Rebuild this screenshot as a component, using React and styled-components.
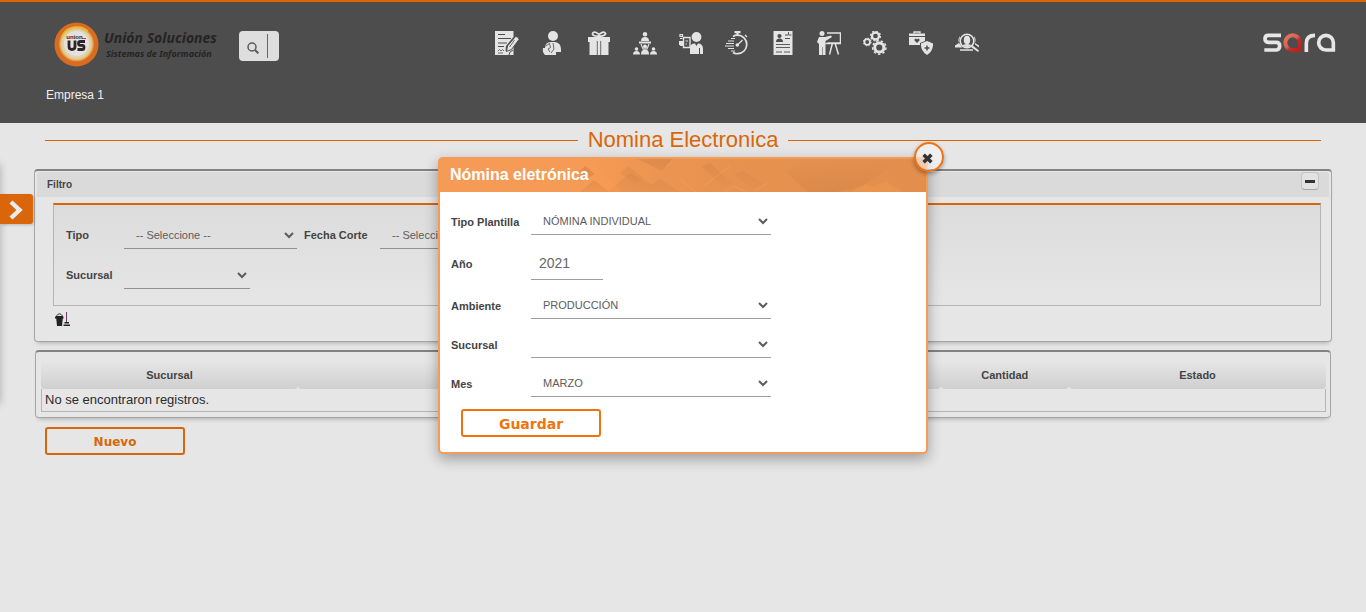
import React from 'react';
import styled, { createGlobalStyle } from 'styled-components';

const sans = '"Liberation Sans", Arial, sans-serif';
const orange = '#d9660b';
const ink = '#e4e4e4';
const dark = '#4d4d4d';

const GlobalStyle = createGlobalStyle`
  *, *::before, *::after { box-sizing: border-box; }
  body { margin: 0; background: #e6e6e6; font-family: ${sans}; color: #444; }
  button, input, select { font-family: inherit; margin: 0; }
`;

const Page = styled.div`
  position: relative;
  min-height: 100vh;
  overflow: hidden;
`;

/* ---------- top bar ---------- */
const TopBar = styled.header`
  background: ${dark};
  border-top: 2px solid ${orange};
  padding: 0 30px 17px 46px;
`;
const TopRow = styled.div`
  display: flex;
  align-items: center;
  height: 82px;
`;
const Brand = styled.a`
  display: flex;
  align-items: center;
  gap: 5px;
  width: 193px;
  margin-top: 2px;
  padding-left: 8px;
  color: #262324;
  text-decoration: none;
  font-family: "Noto Sans", sans-serif;
  font-weight: 700;
  font-style: italic;
`;
const BrandText = styled.span`
  display: flex;
  flex-direction: column;
  white-space: nowrap;
`;
const BrandName = styled.span`
  font-size: 14px;
  line-height: 18px;
`;
const BrandTag = styled.span`
  padding-left: 2px;
  font-size: 9px;
  line-height: 13px;
`;
const SearchBox = styled.form`
  display: flex;
  align-items: center;
  width: 40px;
  height: 30px;
  margin-top: 6px;
  border-radius: 4px;
  background: #dedede;
`;
const SearchButton = styled.button`
  display: flex;
  justify-content: center;
  width: 28px;
  padding: 4px 0 0;
  border: 0;
  background: none;
`;
const SearchInput = styled.input`
  width: 10px;
  height: 24px;
  padding: 0;
  border: 0;
  border-left: 1px solid #666;
  background: none;
  outline: none;
`;
const Nav = styled.nav`
  display: flex;
  gap: 22px;
  margin-left: 216px;
`;
const NavLink = styled.a`
  display: block;
  width: 24px;
  height: 24px;
`;
const ProductLogo = styled.a`
  display: block;
  height: 22px;
  margin-left: auto;
`;
const Company = styled.div`
  color: #f0f0f0;
  font-size: 12px;
  line-height: 22px;
`;

/* ---------- page body ---------- */
const Main = styled.main`
  padding: 5px 35px 0;
`;
const Title = styled.h1`
  display: flex;
  align-items: center;
  gap: 10px;
  margin: 0 10px 17px;
  color: ${orange};
  font-size: 22px;
  font-weight: 400;
  line-height: 24px;
  &::before, &::after {
    content: "";
    flex: 1;
    height: 1px;
    background: ${orange};
  }
`;
const Panel = styled.section`
  border: 1px solid #a6a6a6;
  border-top: 2px solid #828282;
  border-radius: 4px;
  box-shadow: 0 4px 4px -3px rgba(0, 0, 0, 0.25);
`;
const FilterPanel = styled(Panel)`
  margin: 0 -1px 8px;
  padding: 1px 2px 13px;
`;
const PanelHeader = styled.div`
  display: flex;
  align-items: center;
  justify-content: space-between;
  height: 25px;
  padding: 0 10px;
  border-radius: 4px 4px 0 0;
  background: #dadada;
`;
const PanelTitle = styled.h2`
  margin: 0;
  font-size: 10px;
  line-height: 12px;
`;
const CollapseButton = styled.button`
  display: flex;
  align-self: flex-start;
  align-items: center;
  justify-content: center;
  width: 18px;
  height: 18px;
  padding: 0;
  border: 1px solid #c4c4c4;
  border-bottom-color: #a6a6a6;
  border-radius: 4px;
  background: #e2e2e2;
`;
const FilterBody = styled.div`
  padding: 6px 8px 0 16px;
`;
const FilterFields = styled.div`
  display: grid;
  grid-template-columns: 58px 173px 7px 76px 173px;
  grid-auto-rows: 40px;
  align-items: center;
  padding: 10px 12px;
  border: 1px solid #b4b4b4;
  border-top: 2px solid ${orange};
  background: linear-gradient(#dcdcdc, #e6e6e6);
`;
const Label = styled.label`
  grid-column: ${(p) => p.$col || 'auto'};
  color: #444;
  font-size: 11px;
  font-weight: 700;
  line-height: 14px;
  white-space: nowrap;
`;
const Select = styled.select`
  width: ${(p) => p.$width || '100%'};
  height: 28px;
  padding: 0 0 0 8px;
  border: 0;
  border-bottom: 1px solid ${(p) => p.$line || '#919191'};
  border-radius: 0;
  background: transparent;
  color: #5c5c5c;
  font-size: 11px;
`;
const CleanButton = styled.button`
  display: block;
  margin: 5px 0 0 2px;
  padding: 0;
  border: 0;
  background: none;
  line-height: 0;
`;
const TablePanel = styled(Panel)`
  padding: 9px 4px 5px 5px;
`;
const Table = styled.table`
  width: 100%;
  border-collapse: separate;
  border-spacing: 0;
  table-layout: fixed;
`;
const HeadCell = styled.th`
  width: ${(p) => p.$width};
  height: 28px;
  padding: 0 0 1px;
  border-radius: 0 0 4px 4px;
  background: linear-gradient(#e6e6e6, #cfcfcf);
  font-size: 11px;
  line-height: 14px;
`;
const EmptyCell = styled.td`
  height: 23px;
  padding: 0 3px;
  border: 1px solid #b4b4b4;
  border-top: 0;
  color: #2b2b2b;
  font-size: 13px;
  line-height: 18px;
`;
const OutlineButton = styled.button`
  display: block;
  width: 140px;
  height: 28px;
  padding: 2px 0 0;
  border: 2px solid ${(p) => p.$color};
  border-radius: 3px;
  background: ${(p) => p.$bg};
  color: ${(p) => p.$color};
  font-family: "DejaVu Sans", Verdana, sans-serif;
  font-size: ${(p) => p.$size};
  font-weight: 700;
`;
const Actions = styled.div`
  padding: 9px 10px;
`;

/* ---------- side drawer ---------- */
const Drawer = styled.aside`
  position: absolute;
  top: 164px;
  left: -220px;
  width: 220px;
  height: 240px;
  box-shadow: 0 0 8px rgba(0, 0, 0, 0.25);
`;
const DrawerTab = styled.button`
  position: absolute;
  top: 30px;
  left: 220px;
  display: flex;
  align-items: center;
  width: 33px;
  height: 30px;
  padding: 2px 0 0 9px;
  border: 0;
  border-radius: 0 3px 3px 0;
  background: ${orange};
  box-shadow: 1px 1px 3px rgba(0, 0, 0, 0.2);
`;

/* ---------- dialog ---------- */
const Overlay = styled.div`
  position: absolute;
  inset: 0;
  display: flex;
  align-items: flex-start;
  justify-content: center;
  padding-top: 157px;
`;
const Dialog = styled.div`
  position: relative;
  width: 490px;
  border: 2px solid #f69b55;
  border-radius: 5px;
  background: #fff;
  box-shadow: 0 5px 14px rgba(0, 0, 0, 0.32);
`;
const DialogHeader = styled.div`
  position: relative;
  display: flex;
  align-items: center;
  height: 33px;
  padding: 0 10px 2px;
  background: #f69b55;
`;
const HeaderArt = styled.svg`
  position: absolute;
  top: 0;
  right: 0;
`;
const DialogTitle = styled.h2`
  position: relative;
  margin: 0;
  color: #fff;
  font-size: 16px;
  line-height: 20px;
`;
const CloseButton = styled.button`
  position: absolute;
  top: -17px;
  right: -18px;
  display: flex;
  align-items: center;
  justify-content: center;
  width: 30px;
  height: 30px;
  padding: 2px 3px 0 0;
  border: 2px solid #f0730f;
  border-radius: 50%;
  background: rgba(245, 245, 245, 0.6);
  background-clip: padding-box;
  box-shadow: 0 2px 4px rgba(0, 0, 0, 0.35);
`;
const DialogForm = styled.form`
  padding: 10px 11px 15px;
`;
const Field = styled.div`
  display: grid;
  grid-template-columns: 80px 240px;
  align-items: center;
  height: ${(p) => (p.$tall ? '45px' : '39px')};

  ${Select} {
    height: 27px;
  }
`;
const YearInput = styled.input`
  width: 72px;
  height: 32px;
  padding: 0 8px;
  border: 0;
  border-bottom: 1px solid #9e9e9e;
  background: none;
  color: #666;
  font-size: 14px;
`;
const DialogActions = styled.div`
  padding: 6px 10px 0;
`;

/* ---------- drawings ---------- */
const icons = {
  Contratos: (
    <>
      <path d="M0 0H18.500V6L11 15L10.500 20L15 18L18.500 14V24H0Z" fill={ink} />
      <path d="M3 3.500H10M3 7.500H16M3 12H12M3 15.500H9" stroke={dark} strokeWidth="1" fill="none" />
      <path d="M3 20l1.500-1.500L6 20l1.500-1.500L9 20M3 22H8" stroke={dark} strokeWidth=".8" fill="none" />
      <path d="M20.500 5.500Q24 5.500 24 8.500L16.500 18.500L11.500 20.500L12.500 15Z" fill={ink} stroke={dark} strokeWidth="1" />
      <path d="M19.500 9L14.500 16" stroke={dark} strokeWidth=".8" />
      <path d="M14 24l1-3 3-2" stroke={dark} fill="none" />
    </>
  ),
  Empleados: (
    <>
      <circle cx="12" cy="5" r="5" fill={ink} />
      <path d="M4 17Q4 11 10 11H14Q20 12 20 18V21H15V24H4Q1 21 2 17Z" fill={ink} />
      <path d="M4.500 15L8.500 12.500L9.500 17M12 12L13 18L10 22M9 17l-2 1 2 3" stroke={dark} strokeWidth=".8" fill="none" />
    </>
  ),
  Beneficios: (
    <>
      <path d="M1 6H23V11H1ZM2.500 11H10.500V24H2.500ZM13.500 11H21.500V24H13.500ZM10.500 6H13.500V24H10.500Z" fill={ink} />
      <path d="M12 5C8 5.500 4 4 6 1.800S10 2 12 3.500C14 2 16 0 18 1.800S16 5.500 12 5Z" fill="none" stroke={ink} strokeWidth="1.700" />
      <path d="M10.300 10V24M13.700 10V24" stroke={dark} strokeWidth=".8" />
    </>
  ),
  Organigrama: (
    <>
      <circle cx="12" cy="3.300" r="2.200" fill={ink} />
      <path d="M8 10Q8 6 12 6T16 10ZM6 10.500H18V12.500H6Z" fill={ink} />
      <path d="M8 13L10 18H14L16 13" fill="none" stroke={ink} strokeWidth="1.200" />
      <circle cx="12" cy="15.500" r="2" fill={ink} />
      <circle cx="3.500" cy="18" r="1.800" fill={ink} />
      <circle cx="20.500" cy="18" r="1.800" fill={ink} />
      <path d="M0 23.500Q0 20 3.500 20T7 23.500ZM8 23.500Q8 18.500 12 18.500T16 23.500ZM17 23.500Q17 20 20.500 20T24 23.500Z" fill={ink} />
    </>
  ),
  Asistencia: (
    <>
      <circle cx="17.500" cy="6" r="4.900" fill={ink} />
      <path d="M11 23V17Q11 12.500 16 12.500L17.500 15L19 12.500Q24 12.500 24 18V23Z" fill={ink} />
      <path d="M20.500 17V23" stroke={dark} />
      <path d="M4.500 6.500H11V16.500H4.500Z" fill="none" stroke={ink} strokeWidth="1.400" />
      <path d="M6.500 10H9M6.500 13H8" stroke={ink} />
      <path d="M0 10H4V15H1.500L0 13.500Z" fill={ink} />
      <path d="M1 3.500H3.500V5.500H1ZM1 7.500H3.500" fill="none" stroke={ink} strokeWidth="1.200" />
    </>
  ),
  Tiempos: (
    <>
      <path d="M12.500 4.200A9.200 9.200 0 0 1 12.500 22.700Q10 23 8 21.500M8 5.500Q10 4.200 12.500 4.200" fill="none" stroke={ink} strokeWidth="1.700" />
      <path d="M9.500 0H15.500V2.200H9.500ZM11.500 1H13.500V4H11.500Z" fill={ink} />
      <path d="M20 4L22 6M12.500 14L17.500 9M6 7.500H10M3 10H9M1 12.500H9M0 15H9M3 17.500H9M6 20H10" stroke={ink} strokeWidth="1.200" />
      <circle cx="12.300" cy="14" r="1.800" fill={ink} />
    </>
  ),
  HojaDeVida: (
    <>
      <path d="M2.500 0H21.500V24H2.500Z" fill={ink} />
      <circle cx="8.500" cy="5" r="2.100" fill={dark} />
      <path d="M5 11Q5 7.500 8.500 7.500T12 11ZM14 3.500h3v1h-3zM14 7h5v1h-5z" fill={dark} />
      <path d="M5 13.500H19M5 16.500H19M5 21H11M13 21H19M17.500 1v3h3" stroke={dark} strokeWidth=".9" fill="none" />
    </>
  ),
  Capacitacion: (
    <>
      <circle cx="5" cy="2.500" r="2.500" fill={ink} />
      <path d="M2 6H8L14 4.500L15 6L8.500 10V24H5.500V16H5V24H2V13L0 11Z" fill={ink} />
      <path d="M10 2H23.500V12H10.500M15.500 12L12.500 23.500M18 12L21.500 23.500M8.500 12.500H24" fill="none" stroke={ink} strokeWidth="1.500" />
    </>
  ),
  Configuracion: (
    <>
      <circle cx="12.500" cy="5" r="3.500" fill="none" stroke={ink} strokeWidth="2.300" />
      <circle cx="12.500" cy="5" r="5" fill="none" stroke={ink} strokeWidth="1.200" strokeDasharray="2 1.900" />
      <circle cx="4.200" cy="11" r="2.800" fill="none" stroke={ink} strokeWidth="1.800" />
      <circle cx="4.200" cy="11" r="3.900" fill="none" stroke={ink} strokeWidth="1" strokeDasharray="1.600 1.460" />
      <circle cx="16.300" cy="16.500" r="4.600" fill="none" stroke={ink} strokeWidth="3" />
      <circle cx="16.300" cy="16.500" r="6.700" fill="none" stroke={ink} strokeWidth="1.500" strokeDasharray="2.500 2.180" />
    </>
  ),
  Seguridad: (
    <>
      <path d="M5 2.500V1H11V2.500" fill="none" stroke={ink} strokeWidth="1.300" />
      <path d="M0 2.500H16V5H0ZM0 6H16V10L11 12V14H0Z" fill={ink} />
      <path d="M8 12L5.500 9.500Q5 7.500 7 7.500L8 8.500L9 7.500Q11 7.500 10.500 9.500Z" fill={dark} />
      <path d="M18 10L24 12.500Q24.500 20 18 24Q11.500 20 12 12.500Z" fill={ink} />
      <path d="M18 14.500V19.500M15.500 17H20.500" stroke={dark} strokeWidth="1.500" />
    </>
  ),
  Seleccion: (
    <>
      <path d="M5 5Q2.500 8 4 12L0 14.500V16.500H7.500L4 12M19 5Q21.500 8 20 12L24 14.500V16.500L20 13.500" fill={ink} />
      <circle cx="12" cy="10" r="7.500" fill={dark} />
      <circle cx="12" cy="10" r="6.800" fill="none" stroke={ink} strokeWidth="1.600" />
      <ellipse cx="12" cy="9" rx="3.200" ry="4.300" fill={ink} />
      <path d="M8 14.500Q8 13 12 13T16 14.500Q12 17.500 8 14.500ZM17 14L24 19.500L23 21L16 16Z" fill={ink} />
      <path d="M5 19H18" stroke={ink} strokeWidth="1.500" />
    </>
  ),
};

const BrandMark = () => (
  <svg width="45" height="45" viewBox="0 0 45 45" aria-hidden="true">
    <defs>
      <radialGradient id="ring">
        <stop offset="0.500" stopColor="#e8e2dc" />
        <stop offset="0.650" stopColor="#e5d8b0" />
        <stop offset="0.850" stopColor="#e3cd98" />
        <stop offset="1" stopColor="#dd8a38" />
      </radialGradient>
    </defs>
    <circle cx="22.500" cy="22.500" r="22" fill="#d96c20" />
    <circle cx="22.500" cy="22" r="17.500" fill="url(#ring)" />
    <path d="M8 14A17 17 0 0 1 34 9" fill="none" stroke="#e3c22e" strokeWidth="1.500" />
    <circle cx="22.500" cy="21.500" r="12.500" fill="#e4e1e0" />
    <text x="20.500" y="16.500" textAnchor="middle" fontFamily="Liberation Sans" fontStyle="normal" fontWeight="700" fontSize="6" fill="#2a2526">union</text>
    <path d="M28 16.500h4" stroke="#c33" />
    <path d="M15 18.500V24.500Q15 27.500 18 27.500T21 24.500V18.500M31 19.500H26.500Q24.500 19.500 24.500 21.500T26.500 23.300H28.500Q30 23.300 30 25.400T28 27.500H23.500" fill="none" stroke="#2a2526" strokeWidth="2.800" />
  </svg>
);

const SaraMark = () => (
  <svg width="74" height="22" viewBox="66 36 222 66" role="img" aria-label="sara">
    <defs>
      <linearGradient id="drop" x1="0" y1="0" x2="1" y2="1">
        <stop offset="0" stopColor="#e2755f" />
        <stop offset="0.450" stopColor="#d9634f" />
        <stop offset="0.600" stopColor="#c22f25" />
        <stop offset="1" stopColor="#b3221c" />
      </linearGradient>
    </defs>
    <g fill="none" stroke="#e6e6e6" strokeWidth="11">
      <path d="M123 46H85Q75 46 75 56T85 67H109Q119 67 119 78T109 90H73" />
      <path d="M199 96V70Q199 46 225 46" />
      <path d="M280 90H258A22 22 0 1 1 280 68Z" />
    </g>
    <path d="M180 90H158A22 22 0 1 1 180 68Z" fill="none" stroke="url(#drop)" strokeWidth="12" />
  </svg>
);

const columns = [
  { title: 'Sucursal', width: '20%' },
  { title: '', width: '30%' },
  { title: '', width: '20%' },
  { title: 'Cantidad', width: '10%' },
  { title: 'Estado', width: '20%' },
];

const SelectField = ({ id, label, value }) => (
  <Field>
    <Label htmlFor={id}>{label}</Label>
    <Select id={id} $line="#9e9e9e">
      <option>{value}</option>
    </Select>
  </Field>
);

export default function App() {
  return (
    <Page>
      <GlobalStyle />
      <TopBar>
        <TopRow>
          <Brand href="#">
            <BrandMark />
            <BrandText>
              <BrandName>Unión Soluciones</BrandName>
              <BrandTag>Sistemas de Información</BrandTag>
            </BrandText>
          </Brand>
          <SearchBox role="search">
            <SearchButton type="button" aria-label="Buscar">
              <svg width="12" height="12" viewBox="0 0 12 12" fill="none" stroke="#5a5a5a">
                <circle cx="5" cy="5" r="4" strokeWidth="1.500" />
                <path d="M8 8L11.300 11.300" strokeWidth="2" />
              </svg>
            </SearchButton>
            <SearchInput aria-label="Texto a buscar" />
          </SearchBox>
          <Nav>
            {Object.entries(icons).map(([name, art]) => (
              <NavLink key={name} href="#" aria-label={name}>
                <svg width="24" height="24" viewBox="0 0 24 24">{art}</svg>
              </NavLink>
            ))}
          </Nav>
          <ProductLogo href="#"><SaraMark /></ProductLogo>
        </TopRow>
        <Company>Empresa 1</Company>
      </TopBar>

      <Main>
        <Title>Nomina Electronica</Title>
        <FilterPanel>
          <PanelHeader>
            <PanelTitle>Filtro</PanelTitle>
            <CollapseButton type="button" aria-label="Contraer">
              <svg width="10" height="3"><path d="M0 0H10V3H0Z" fill="#333" /></svg>
            </CollapseButton>
          </PanelHeader>
          <FilterBody>
            <FilterFields>
              <Label htmlFor="tipo">Tipo</Label>
              <Select id="tipo"><option>-- Seleccione --</option></Select>
              <Label htmlFor="fecha" $col="4">Fecha Corte</Label>
              <Select id="fecha"><option>-- Seleccione --</option></Select>
              <Label htmlFor="sucursal" $col="1">Sucursal</Label>
              <Select id="sucursal" $width="126px"><option></option></Select>
            </FilterFields>
            <CleanButton type="button" aria-label="Limpiar">
              <svg width="16" height="17" viewBox="0 0 16 17">
                <path d="M1 5H8L7 15H2Z" fill="#222" />
                <path d="M1.500 5Q4.500 .5 7.500 5" fill="none" stroke="#333" />
                <path d="M0 6.500H8.500" stroke="#222" strokeWidth="2" />
                <path d="M11.500 1V11" stroke="#7a3566" />
                <path d="M9.500 11H14V12.500H9.500ZM8.500 13.500H15V15H8.500Z" fill="#222" />
              </svg>
            </CleanButton>
          </FilterBody>
        </FilterPanel>

        <TablePanel>
          <Table>
            <thead>
              <tr>
                {columns.map((c, i) => (
                  <HeadCell key={i} $width={c.width} scope="col">{c.title}</HeadCell>
                ))}
              </tr>
            </thead>
            <tbody>
              <tr><EmptyCell colSpan={columns.length}>No se encontraron registros.</EmptyCell></tr>
            </tbody>
          </Table>
        </TablePanel>
        <Actions>
          <OutlineButton type="button" $color={orange} $bg="#e6e6e6" $size="12px">Nuevo</OutlineButton>
        </Actions>
      </Main>

      <Drawer>
        <DrawerTab type="button" aria-label="Abrir menú">
          <svg width="15" height="20" viewBox="0 0 15 20">
            <path d="M2 2L10.500 10L2 18" fill="none" stroke="#ececec" strokeWidth="4.400" />
          </svg>
        </DrawerTab>
      </Drawer>

      <Overlay>
        <Dialog role="dialog" aria-labelledby="dialog-title">
          <DialogHeader>
            <HeaderArt width="358" height="33" viewBox="0 0 358 33" aria-hidden="true">
              <defs>
                <linearGradient id="fade">
                  <stop offset="0" stopColor="#c87c42" stopOpacity="0" />
                  <stop offset="0.200" stopColor="#c87c42" stopOpacity="0.220" />
                  <stop offset="0.500" stopColor="#c87c42" stopOpacity="0.320" />
                  <stop offset="1" stopColor="#c87c42" stopOpacity="0.420" />
                </linearGradient>
                <linearGradient id="peak" x1="0" y1="0" x2="0" y2="1">
                  <stop offset="0" stopColor="#c87c42" stopOpacity="0.400" />
                  <stop offset="1" stopColor="#c87c42" stopOpacity="0.050" />
                </linearGradient>
                <linearGradient id="base" x1="0" y1="0" x2="0" y2="1">
                  <stop offset="0" stopColor="#c87c42" stopOpacity="0.550" />
                  <stop offset="1" stopColor="#c87c42" stopOpacity="0.200" />
                </linearGradient>
                <linearGradient id="slope" x1="0" y1="0" x2="0" y2="1">
                  <stop offset="0" stopColor="#c87c42" stopOpacity="0" />
                  <stop offset="1" stopColor="#c87c42" stopOpacity="0.350" />
                </linearGradient>
              </defs>
              <path d="M22 0H358V33H54L34 16Z" fill="url(#fade)" />
              <g fill="url(#base)">
                <path d="M10 14L17 7L27 15L18 20ZM12 33L26 21L42 33Z" />
                <path d="M42 31L62 14L84 26L92 20L112 33H42Z" opacity=".6" />
              </g>
              <g fill="url(#peak)">
                <path d="M52 15L60 7L76 19L68 24ZM70 0H104L94 12L86 8ZM134 8L142 4L164 24L156 28ZM166 16L174 12L196 24L186 30Z" />
              </g>
              <path d="M216 12L232 0H334L296 26L284 30L268 33H240Z" fill="url(#slope)" />
              <path d="M284 33L298 25L304 28L318 22L334 33Z" fill="#ee974f" opacity=".6" />
              <path d="M98 8L106 0M136 27L162 7M156 33L166 27L178 33M112 20L128 33M186 32L200 24" fill="none" stroke="#f3a263" strokeWidth="1" opacity=".6" />
            </HeaderArt>
            <DialogTitle id="dialog-title">Nómina eletrónica</DialogTitle>
          </DialogHeader>
          <DialogForm>
            <SelectField id="plantilla" label="Tipo Plantilla" value="NÓMINA INDIVIDUAL" />
            <Field $tall>
              <Label htmlFor="anio">Año</Label>
              <YearInput id="anio" defaultValue="2021" />
            </Field>
            <SelectField id="ambiente" label="Ambiente" value="PRODUCCIÓN" />
            <SelectField id="sucursal-nomina" label="Sucursal" value="" />
            <SelectField id="mes" label="Mes" value="MARZO" />
            <DialogActions>
              <OutlineButton type="button" $color="#f0730f" $bg="#fff" $size="14px">Guardar</OutlineButton>
            </DialogActions>
          </DialogForm>
          <CloseButton type="button" aria-label="Cerrar">
            <svg width="11" height="11" viewBox="0 0 10 10">
              <path d="M1.500 1.500L8.500 8.500M8.500 1.500L1.500 8.500" stroke="#333" strokeWidth="3.200" />
            </svg>
          </CloseButton>
        </Dialog>
      </Overlay>
    </Page>
  );
}
